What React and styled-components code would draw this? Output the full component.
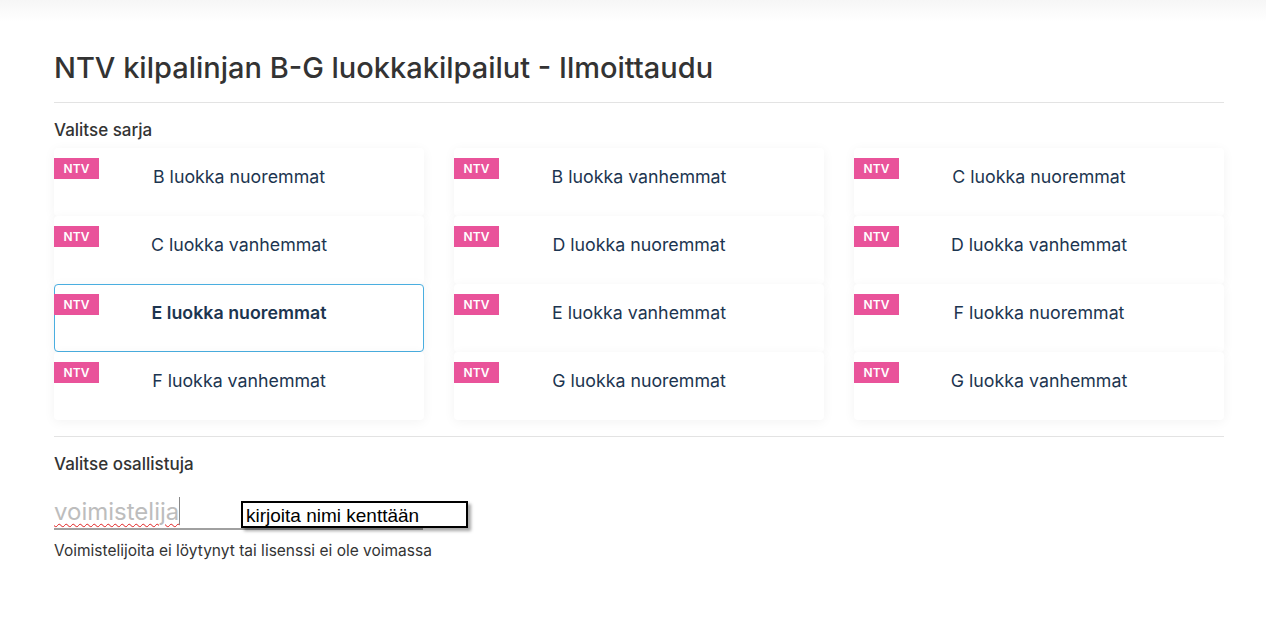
import React, { useState } from "react";
import styled, { createGlobalStyle } from "styled-components";

const series = [
  "B luokka nuoremmat",
  "B luokka vanhemmat",
  "C luokka nuoremmat",
  "C luokka vanhemmat",
  "D luokka nuoremmat",
  "D luokka vanhemmat",
  "E luokka nuoremmat",
  "E luokka vanhemmat",
  "F luokka nuoremmat",
  "F luokka vanhemmat",
  "G luokka nuoremmat",
  "G luokka vanhemmat",
];

const GlobalStyle = createGlobalStyle`
  body {
    margin: 0;
    background: #fff;
    font-family: Inter, "Noto Sans", sans-serif;
    color: #333;
  }
`;

const App = () => {
  const [selected, setSelected] = useState(series[6]);

  return (
    <>
      <GlobalStyle />
      <TopBar />
      <Page>
        <Title>NTV kilpalinjan B-G luokkakilpailut - Ilmoittaudu</Title>
        <Divider />
        <SectionLabel>Valitse sarja</SectionLabel>
        <SeriesGrid>
          {series.map((name) => (
            <SeriesCard
              key={name}
              $active={name === selected}
              onClick={() => setSelected(name)}
            >
              <Tag>NTV</Tag>
              <SeriesName $active={name === selected}>{name}</SeriesName>
            </SeriesCard>
          ))}
        </SeriesGrid>
        <Divider $tight />
        <SectionLabel>Valitse osallistuja</SectionLabel>
        <Field>
          <FieldValue>voimistelija</FieldValue>
          <Caret />
          <Hint>kirjoita nimi kenttään</Hint>
        </Field>
        <HelpText>Voimistelijoita ei löytynyt tai lisenssi ei ole voimassa</HelpText>
      </Page>
    </>
  );
};

export default App;

const TopBar = styled.div`
  height: 22px;
  background: linear-gradient(#f6f6f6, #fff);
`;

const Page = styled.main`
  width: 1170px;
  padding-left: 54px;
`;

const Title = styled.h1`
  margin: 29px 0 0;
  font-size: 29px;
  line-height: 34px;
  font-weight: 500;
  color: #333;
`;

const Divider = styled.hr`
  border: 0;
  border-top: 1px solid #e3e3e3;
  margin: ${(p) => (p.$tight ? "16px 0 17px" : "17px 0 17px")};
`;

const SectionLabel = styled.div`
  font-size: 17px;
  line-height: 20px;
  font-weight: 500;
  color: #333;
`;

const SeriesGrid = styled.div`
  display: grid;
  grid-template-columns: repeat(3, 370px);
  column-gap: 30px;
  margin-top: 8px;
`;

const SeriesCard = styled.div`
  height: 68px;
  box-sizing: border-box;
  display: flex;
  align-items: flex-start;
  background: #fff;
  border-radius: 4px;
  border: 1px solid ${(p) => (p.$active ? "#4aaee0" : "transparent")};
  box-shadow: 0 2px 12px rgba(0, 0, 0, 0.05);
  cursor: pointer;
`;

const Tag = styled.span`
  margin-top: 9px;
  margin-left: -1px;
  width: 45px;
  height: 21px;
  display: flex;
  align-items: center;
  justify-content: center;
  background: #e9539a;
  color: #fff;
  font-size: 12px;
  font-weight: 600;
`;

const SeriesName = styled.span`
  flex: 1;
  margin-right: 44px;
  padding-top: 17px;
  text-align: center;
  font-size: 17.8px;
  line-height: 21px;
  font-weight: ${(p) => (p.$active ? 600 : 400)};
  color: #1c3550;
`;

const Field = styled.div`
  position: relative;
  width: 369px;
  height: 40px;
  margin-top: 14px;
  display: flex;
  align-items: center;
  border-bottom: 2px solid #a0a0a0;
`;

const FieldValue = styled.span`
  font-size: 24px;
  padding-top: 6px;
  color: #bdbdbd;
  text-decoration: underline wavy #e02020 1px;
  text-underline-offset: 3px;
`;

const Caret = styled.span`
  width: 1px;
  height: 28px;
  margin-top: 6px;
  background: #888;
`;

const Hint = styled.div`
  position: absolute;
  left: 187px;
  top: 13px;
  width: 220px;
  height: 23px;
  border: 2px solid #000;
  background: #fff;
  box-shadow: 3px 3px 3px rgba(0, 0, 0, 0.35);
  font-family: "Liberation Sans", Arial, sans-serif;
  font-size: 19px;
  line-height: 25px;
  padding-left: 3px;
  color: #000;
`;

const HelpText = styled.div`
  margin-top: 12px;
  font-size: 15.5px;
  line-height: 18px;
  color: #333;
`;
